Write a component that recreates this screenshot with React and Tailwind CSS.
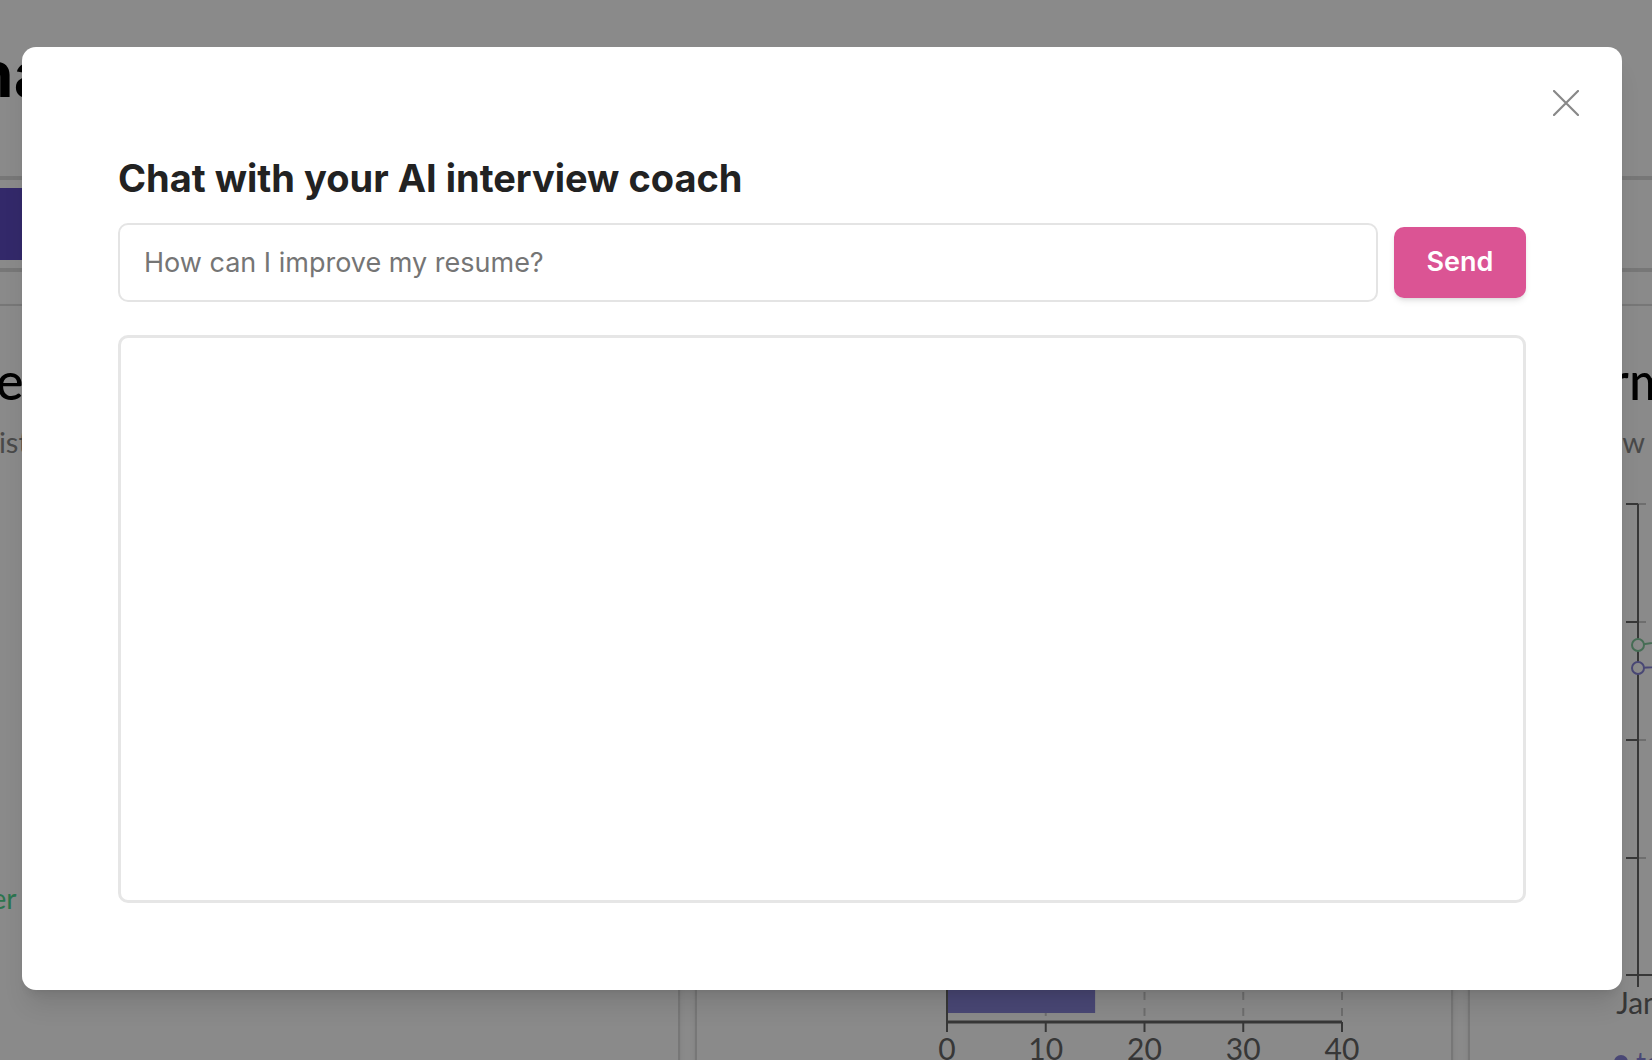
const bars = [
  { label: 'Technical', value: 32 },
  { label: 'System Design', value: 22 },
  { label: 'Team', value: 15 },
]

const BarChart = () => {
  const x0 = 223
  const step = 98.75
  return (
    <svg width="700" height="600" className="block">
      {[1, 2, 3, 4].map((i) => (
        <line key={i} x1={x0 + i * step} x2={x0 + i * step} y1="160" y2="542" stroke="#ccc" strokeWidth="2" strokeDasharray="8 8" />
      ))}
      {bars.map((b, i) => {
        const y = 260 + i * 100
        return (
          <g key={b.label}>
            <rect x={x0} y={y} width={(b.value / 40) * 395} height="73" fill="#8884d8" />
            <text x="205" y={y + 44} textAnchor="end" fontSize="28" fill="#666">{b.label}</text>
          </g>
        )
      })}
      <line x1={x0} x2={x0} y1="160" y2="542" stroke="#666" strokeWidth="2" />
      <line x1={x0} x2={x0 + 395} y1="542" y2="542" stroke="#666" strokeWidth="3" />
      {[0, 10, 20, 30, 40].map((t, i) => (
        <g key={t}>
          <line x1={x0 + i * step} x2={x0 + i * step} y1="542" y2="552" stroke="#666" strokeWidth="2" />
          <text x={x0 + i * step} y="580" textAnchor="middle" fontSize="30" fill="#666">{t}</text>
        </g>
      ))}
    </svg>
  )
}

const LineChart = () => {
  const ax = 152
  const ys = [14, 132, 250, 368, 485]
  return (
    <svg width="700" height="545" className="block">
      {ys.slice(0, 4).map((y) => (
        <line key={y} x1={ax} x2="700" y1={y} y2={y} stroke="#ccc" strokeWidth="2" strokeDasharray="8 8" />
      ))}
      {ys.map((y) => (
        <line key={'t' + y} x1={ax - 12} x2={ax} y1={y} y2={y} stroke="#666" strokeWidth="2" />
      ))}
      <line x1={ax} x2={ax} y1="14" y2="497" stroke="#666" strokeWidth="2" />
      <line x1={ax} x2="700" y1="485" y2="485" stroke="#666" strokeWidth="2" />
      <polyline points={`${ax},155 400,118 700,96`} stroke="#82ca9d" strokeWidth="2" fill="none" />
      <polyline points={`${ax},178 400,166 700,128`} stroke="#8884d8" strokeWidth="2" fill="none" />
      <circle cx={ax} cy="155" r="6" fill="#fff" stroke="#82ca9d" strokeWidth="2" />
      <circle cx={ax} cy="178" r="6" fill="#fff" stroke="#8884d8" strokeWidth="2" />
      <text x={ax} y="524" textAnchor="middle" fontSize="30" fill="#666">Jan</text>
    </svg>
  )
}

const Donut = () => (
  <svg width="380" height="380" className="mx-auto block">
    <circle cx="190" cy="190" r="140" fill="none" stroke="#8884d8" strokeWidth="60" />
    <circle cx="190" cy="190" r="140" fill="none" stroke="#82ca9d" strokeWidth="60" strokeDasharray="300 900" />
  </svg>
)

const Dashboard = () => (
  <div className="-ml-[100px] w-[2326px] font-['Lato',sans-serif] text-black">
    <h1 className="ml-[26px] pt-[42px] font-['Inter',sans-serif] text-[64px] leading-[64px] font-bold">
      Analytics
    </h1>

    <div className="mt-[70px] border-y-4 border-[#dcdcdc] py-[8px] pl-[18px]">
      <div className="flex gap-4">
        <div className="flex h-[72px] w-[520px] items-center justify-center rounded-md bg-[#5e4cc4] text-[28px] text-white">
          Overview
        </div>
        <div className="flex h-[72px] w-[320px] items-center justify-center text-[28px] text-gray-600">
          History
        </div>
      </div>
    </div>

    <div className="mt-[32px] grid grid-cols-[780px_758px_758px] gap-[15px]">
      <div className="h-[900px] rounded-[12px] border-2 border-[#dcdcdc] bg-white pt-[43px] pr-[27px] pl-[21px] shadow-md">
        <h2 className="text-[52px] leading-[1.2] font-medium">Role: Frontend Engineer</h2>
        <p className="mt-[14px] text-[29px] leading-[1.2] text-[#888]">Shortlist your target roles</p>
        <div className="mt-[20px] mb-[22px]">
          <Donut />
        </div>
        <a className="text-[28px] leading-[1.2] text-[#50d890]">Answer practice questions</a>
      </div>

      <div className="h-[900px] rounded-[12px] border-2 border-[#dcdcdc] bg-white px-[27px] pt-[43px] shadow-md">
        <h2 className="text-[52px] leading-[1.2] font-medium">Interview Breakdown</h2>
        <p className="mt-[14px] text-[29px] leading-[1.2] text-[#888]">Questions answered by category</p>
        <div className="mt-[20px]">
          <BarChart />
        </div>
      </div>

      <div className="h-[900px] rounded-[12px] border-2 border-[#dcdcdc] bg-white pt-[43px] pr-[27px] pl-[16px] shadow-md">
        <h2 className="text-[52px] leading-[1.2] font-medium">Performance</h2>
        <p className="mt-[14px] text-[29px] leading-[1.2] text-[#888]">By interview type and month</p>
        <div className="mt-[30px]">
          <LineChart />
        </div>
        <div className="mt-[6px] ml-[128px] flex items-center gap-2 text-[28px] text-[#8884d8]">
          <span className="h-[14px] w-[14px] rounded-full bg-[#8884d8]" />
          <span>technical</span>
        </div>
      </div>
    </div>
  </div>
)

const ChatModal = () => (
  <div className="absolute inset-0 bg-black/[0.46] pt-[47px] pl-[22px]">
    <div className="relative h-[943px] w-[1600px] rounded-[14px] bg-white px-[96px] pt-[109px] font-['Inter',sans-serif] shadow-xl">
      <button className="absolute top-[36px] right-[36px] flex h-10 w-10 items-center justify-center">
        <svg width="26" height="26" viewBox="0 0 26 26">
          <path d="M1 1 L25 25 M25 1 L1 25" stroke="#888" strokeWidth="2.2" strokeLinecap="round" />
        </svg>
      </button>

      <h2 className="text-[38px] leading-[44px] font-bold text-[#222]">
        Chat with your AI interview coach
      </h2>

      <div className="mt-[23px] flex items-center gap-4">
        <input
          className="h-[79px] flex-1 rounded-[10px] border-2 border-[#e4e4e4] px-[24px] text-[27px] text-[#222] outline-none placeholder:text-[#757575]"
          placeholder="How can I improve my resume?"
        />
        <button className="h-[71px] w-[132px] rounded-[10px] bg-[#db5494] text-[27px] font-semibold text-white shadow-md">
          Send
        </button>
      </div>

      <div className="mt-[33px] h-[568px] rounded-[10px] border-[3px] border-[#e6e6e6]" />
    </div>
  </div>
)

export default function App() {
  return (
    <div className="relative h-[1060px] w-[1652px] overflow-hidden bg-white">
      <Dashboard />
      <ChatModal />
    </div>
  )
}
